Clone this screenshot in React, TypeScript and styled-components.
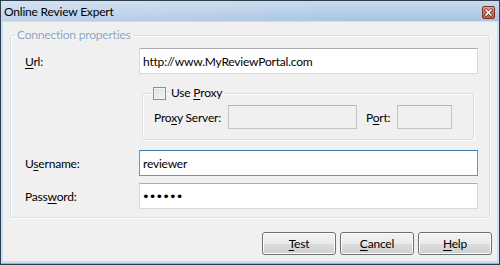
import React from "react";
import styled, { createGlobalStyle } from "styled-components";

const FONT = `"Lato", "Noto Sans", sans-serif`;

const Global = createGlobalStyle`
  html, body { margin: 0; padding: 0; background: #ffffff; }
  body { font-family: ${FONT}; font-size: 12px; letter-spacing: -0.2px; color: #000; }
  * { box-sizing: border-box; }
`;

const Window = styled.div`
  width: 500px;
  height: 265px;
  border: 1px solid #2f3e4e;
  background: #bcd6ec;
  display: flex;
  flex-direction: column;
`;

const TitleBar = styled.div`
  height: 20px;
  display: flex;
  align-items: center;
  justify-content: space-between;
  padding: 0 4px 0 3px;
  background: linear-gradient(to right, rgba(255, 255, 255, 0.25), rgba(255, 255, 255, 0) 70%),
    linear-gradient(#c8daee, #aac4e1);
`;

const Title = styled.span`
  font-size: 12px;
  color: #000;
`;

const CloseBox = styled.div`
  width: 13px;
  height: 13px;
  margin-top: 2px;
  display: flex;
`;

const Frame = styled.div`
  flex: 1;
  display: flex;
  padding: 1px 2px 2px 2px;
  background: #c7e1f2;
  border-bottom: 1px solid #5cc8ee;
`;

const Client = styled.div`
  flex: 1;
  background: #f0f0f0;
  display: flex;
  flex-direction: column;
  padding: 5px 5px 6px 7px;
`;

const Group = styled.fieldset`
  margin: 0 2px 0 0;
  padding: 5px 11px 8px 14px;
  border: 1px solid #d5dfe5;
  border-radius: 3px;
  box-shadow: inset 1px 1px 0 #ffffff, 1px 1px 0 #ffffff;
  display: flex;
  flex-direction: column;
  min-width: 0;
`;

const Legend = styled.legend`
  margin-left: -10px;
  padding: 0 2px;
  color: #8aa9c9;
  font-size: 12px;
  line-height: 16px;
`;

const Row = styled.div<{ $mt?: number }>`
  display: flex;
  align-items: center;
  margin-top: ${(p) => p.$mt ?? 0}px;
`;

const Label = styled.label<{ $w?: number; $ml?: number }>`
  width: ${(p) => p.$w ?? 114}px;
  margin-left: ${(p) => p.$ml ?? 0}px;
  flex: none;
  color: #000;
  white-space: nowrap;
  font-size: 12px;
`;

const Key = styled.span`
  text-decoration: underline;
  text-underline-offset: 2px;
`;

const TextInput = styled.input<{ $focus?: boolean }>`
  flex: 1;
  height: 26px;
  min-width: 0;
  border: 1px solid ${(p) => (p.$focus ? "#5a9ad3" : "#dadada")};
  border-top-color: ${(p) => (p.$focus ? "#3d7bad" : "#abadb3")};
  background: #fff;
  padding: 0 3px;
  font-family: ${FONT};
  font-size: 12px;
  letter-spacing: -0.2px;
  color: #000;
  outline: none;
`;

const PassInput = styled(TextInput)`
  font-family: "DejaVu Sans", sans-serif;
  font-size: 13px;
  letter-spacing: -0.9px;
  padding-left: 2px;
`;

const ProxyGroup = styled.fieldset`
  margin: 11px 4px 0 117px;
  padding: 4px 10px 10px 11px;
  border: 1px solid #d5dfe5;
  border-radius: 3px;
  box-shadow: inset 1px 1px 0 #ffffff, 1px 1px 0 #ffffff;
  min-width: 0;
`;

const ProxyLegend = styled.legend`
  margin-left: -2px;
  padding: 0 2px 0 1px;
  display: flex;
  align-items: center;
  gap: 5px;
  line-height: 16px;
  font-size: 12px;
`;

const Check = styled.input`
  appearance: none;
  width: 13px;
  height: 13px;
  margin: 0;
  border: 1px solid #8f8f8f;
  background: linear-gradient(135deg, #dcdcdc, #f6f6f6);
  box-shadow: inset 0 0 0 1px #f4f4f4;
`;

const SmallInput = styled.input<{ $w: number }>`
  width: ${(p) => p.$w}px;
  height: 24px;
  flex: none;
  border: 1px solid #c4c4c4;
  border-top-color: #b5b5b5;
  background: #f0f0f0;
  outline: none;
`;

const Buttons = styled.div`
  margin-top: auto;
  display: flex;
  justify-content: flex-end;
  gap: 4px;
`;

const Button = styled.button`
  width: 74px;
  height: 23px;
  border: 1px solid #707070;
  border-radius: 3px;
  background: linear-gradient(#f2f2f2 0%, #ebebeb 50%, #dddddd 51%, #cfcfcf 100%);
  box-shadow: inset 0 0 0 1px #fcfcfc;
  font-family: ${FONT};
  font-size: 12px;
  letter-spacing: -0.2px;
  color: #000;
  padding: 0;
`;

const CloseIcon = () => (
  <svg width="13" height="13" viewBox="0 0 13 13">
    <defs>
      <linearGradient id="cg" x1="0" y1="0" x2="0" y2="1">
        <stop offset="0" stopColor="#e9a699" />
        <stop offset="0.5" stopColor="#d2705c" />
        <stop offset="1" stopColor="#c65a45" />
      </linearGradient>
    </defs>
    <rect x="0.5" y="0.5" width="12" height="12" rx="1.5" fill="url(#cg)" stroke="#7b3426" />
    <path d="M4 4 L9 9 M9 4 L4 9" stroke="#5a2a20" strokeWidth="3" strokeLinecap="square" />
    <path d="M4 4 L9 9 M9 4 L4 9" stroke="#ffffff" strokeWidth="1.6" strokeLinecap="square" />
  </svg>
);

export default function App() {
  return (
    <>
      <Global />
      <Window>
        <TitleBar>
          <Title>Online Review Expert</Title>
          <CloseBox>
            <CloseIcon />
          </CloseBox>
        </TitleBar>
        <Frame>
          <Client>
            <Group>
              <Legend>Connection properties</Legend>
              <Row>
                <Label>
                  <Key>U</Key>rl:
                </Label>
                <TextInput defaultValue="http://www.MyReviewPortal.com" />
              </Row>
              <ProxyGroup>
                <ProxyLegend>
                  <Check type="checkbox" />
                  <span>
                    Use <Key>P</Key>roxy
                  </span>
                </ProxyLegend>
                <Row>
                  <Label $w={74}>
                    Pro<Key>x</Key>y Server:
                  </Label>
                  <SmallInput $w={129} disabled />
                  <Label $w={31} $ml={9}>
                    P<Key>o</Key>rt:
                  </Label>
                  <SmallInput $w={55} disabled />
                </Row>
              </ProxyGroup>
              <Row $mt={10}>
                <Label>
                  U<Key>s</Key>ername:
                </Label>
                <TextInput $focus defaultValue="reviewer" />
              </Row>
              <Row $mt={7}>
                <Label>
                  Pass<Key>w</Key>ord:
                </Label>
                <PassInput type="password" defaultValue="123456" />
              </Row>
            </Group>
            <Buttons>
              <Button>
                <Key>T</Key>est
              </Button>
              <Button>
                <Key>C</Key>ancel
              </Button>
              <Button>
                <Key>H</Key>elp
              </Button>
            </Buttons>
          </Client>
        </Frame>
      </Window>
    </>
  );
}
